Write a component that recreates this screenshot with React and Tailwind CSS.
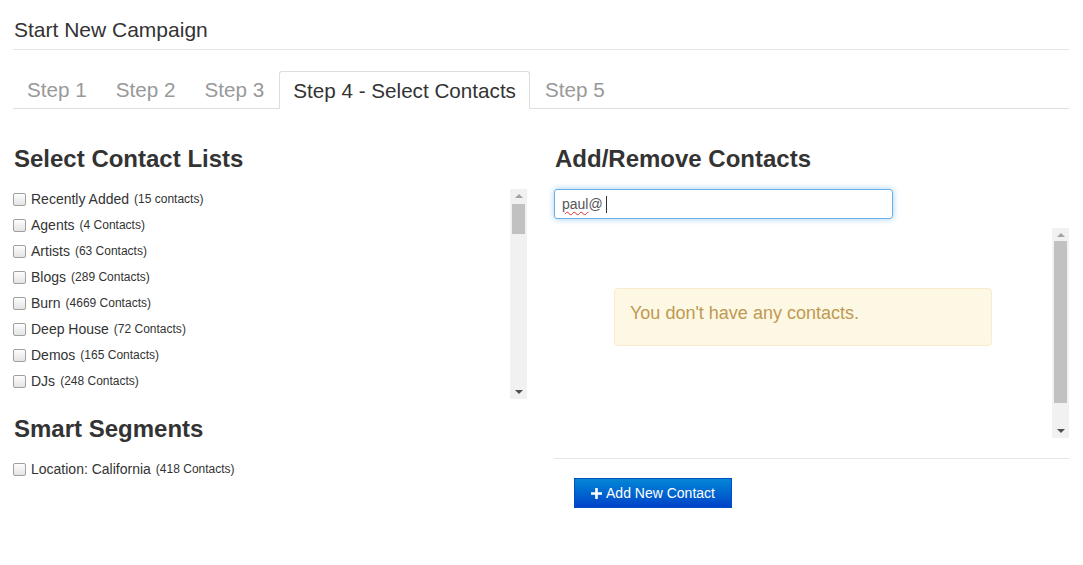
export default function App() {
  const lists = [
    { name: 'Recently Added', count: '15 contacts' },
    { name: 'Agents', count: '4 Contacts' },
    { name: 'Artists', count: '63 Contacts' },
    { name: 'Blogs', count: '289 Contacts' },
    { name: 'Burn', count: '4669 Contacts' },
    { name: 'Deep House', count: '72 Contacts' },
    { name: 'Demos', count: '165 Contacts' },
    { name: 'DJs', count: '248 Contacts' },
  ]

  const tabs = ['Step 1', 'Step 2', 'Step 3', 'Step 4 - Select Contacts', 'Step 5']

  return (
    <div className="min-h-[565px] bg-white pl-[13px] pr-[14px] font-['Liberation_Sans',Arial,sans-serif] text-[#333]">
      <div className="flex h-[50px] items-end border-b border-[#e5e5e5] pb-[9px] pl-px text-[21px] leading-none">
        Start New Campaign
      </div>

      <div className="mt-[21px] flex gap-px border-b border-[#ddd]">
        {tabs.map((t, i) =>
          i === 3 ? (
            <div
              key={t}
              className="-mb-px flex h-[38px] items-center rounded-t-[3px] border border-b-white border-[#ddd] bg-white px-[13px] text-[20.67px] text-[#333]"
            >
              {t}
            </div>
          ) : (
            <div key={t} className="flex h-[37px] items-center px-[14px] text-[20.67px] text-[#999]">
              {t}
            </div>
          )
        )}
      </div>

      <div className="mt-[36px] flex">
        {/* left column */}
        <div className="w-[514px]">
          <h2 className="text-[24px] font-bold leading-[28px] pl-px">Select Contact Lists</h2>
          <div className="mt-[16px] flex h-[210px]">
            <div className="flex flex-1 flex-col gap-[6px]">
              {lists.map((l) => (
                <Row key={l.name} name={l.name} count={l.count} />
              ))}
            </div>
            <Scrollbar thumbTop="mt-[6px]" thumbHeight="h-[30px]" />
          </div>

          <h2 className="mt-[16px] text-[24px] font-bold leading-[28px] pl-px">Smart Segments</h2>
          <div className="mt-[16px]">
            <Row name="Location: California" count="418 Contacts" />
          </div>
        </div>

        {/* right column */}
        <div className="ml-[27px] flex-1">
          <h2 className="text-[24px] font-bold leading-[28px] pl-px">Add/Remove Contacts</h2>
          <div className="mt-[16px] flex h-[30px] w-[339px] items-center rounded-[3px] border border-[#66afe9] px-[7px] text-[14px] text-[#555] shadow-[0_0_6px_rgba(102,175,233,0.6)]">
            <span className="underline decoration-wavy decoration-[#e03030] decoration-1 underline-offset-2">paul</span>
            <span>@</span>
            <span className="ml-[3px] h-[17px] w-px bg-[#333]" />
          </div>

          <div className="mt-[9px] flex h-[210px]">
            <div className="flex flex-1 justify-center pt-[60px]">
              <div className="h-[58px] w-[378px] rounded-[4px] border border-[#faebcc] bg-[#fcf8e3] px-[15px] pt-[11px] text-[18px] text-[#c09853]">
                You don't have any contacts.
              </div>
            </div>
            <Scrollbar thumbTop="mt-[4px]" thumbHeight="h-[162px]" />
          </div>

          <div className="mt-[20px] border-t border-[#e5e5e5] pl-[20px] pt-[19px]">
            <button className="flex h-[30px] w-[158px] items-center justify-center gap-[4px] border border-[#0050c0] bg-gradient-to-b from-[#0a86d6] to-[#0041c8] text-[14px] text-white">
              <svg width="11" height="11" viewBox="0 0 11 11">
                <path d="M4.2 0h2.6v4.2H11v2.6H6.8V11H4.2V6.8H0V4.2h4.2z" fill="white" />
              </svg>
              Add New Contact
            </button>
          </div>
        </div>
      </div>
    </div>
  )
}

function Row({ name, count }) {
  return (
    <div className="flex h-[20px] shrink-0 items-center">
      <span className="h-[13px] w-[13px] rounded-[2px] border border-[#a0a0a0] bg-gradient-to-b from-[#fdfdfd] to-[#e4e4e4]" />
      <span className="ml-[5px] text-[14px] text-[#333]">{name}</span>
      <span className="ml-[5px] text-[12px] text-[#333]">({count})</span>
    </div>
  )
}

function Scrollbar({ thumbTop, thumbHeight }) {
  return (
    <div className="flex w-[17px] flex-col items-center bg-[#f1f1f1]">
      <div className="mt-[5px] h-0 w-0 border-x-[4px] border-b-[4px] border-x-transparent border-b-[#a3a3a3]" />
      <div className={`${thumbTop} ${thumbHeight} w-[13px] bg-[#c1c1c1]`} />
      <div className="flex-1" />
      <div className="mb-[5px] h-0 w-0 border-x-[4px] border-t-[4px] border-x-transparent border-t-[#505050]" />
    </div>
  )
}
